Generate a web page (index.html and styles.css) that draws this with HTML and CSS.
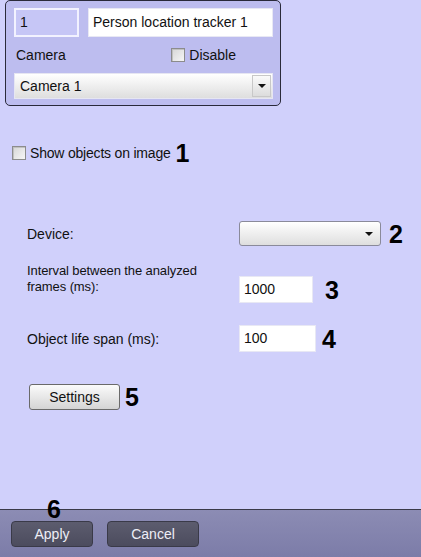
FILE: index.html
```html
<!DOCTYPE html>
<html>
<head>
<meta charset="utf-8">
<link rel="stylesheet" href="styles.css">
</head>
<body>
<div class="page">
  <div class="top-box">
    <div class="row-ids">
      <div class="field id-field">1</div>
      <div class="field name-field">Person location tracker 1</div>
    </div>
    <div class="row-camera">
      <span class="lbl">Camera</span>
      <span class="check-wrap"><span class="checkbox"></span><span class="lbl">Disable</span></span>
    </div>
    <div class="select cam-select">
      <span class="sel-text">Camera 1</span>
      <span class="sel-btn"><span class="arrow"></span></span>
    </div>
  </div>

  <div class="show-row">
    <span class="checkbox"></span>
    <span class="lbl">Show objects on image</span>
    <span class="num num1">1</span>
  </div>

  <div class="form">
    <div class="frow device-row">
      <span class="lbl flabel">Device:</span>
      <div class="select dev-select"><span class="sel-text"></span><span class="arrow"></span></div>
      <span class="num num2">2</span>
    </div>
    <div class="frow interval-row">
      <span class="lbl flabel two">Interval between the analyzed<br>frames (ms):</span>
      <div class="field num-field w74">1000</div>
      <span class="num num3">3</span>
    </div>
    <div class="frow life-row">
      <span class="lbl flabel">Object life span (ms):</span>
      <div class="field num-field w77">100</div>
      <span class="num num4">4</span>
    </div>
    <div class="frow settings-row">
      <button class="btn">Settings</button>
      <span class="num num5">5</span>
    </div>
  </div>

  <div class="footer">
    <span class="num num6">6</span>
    <button class="dbtn apply">Apply</button>
    <button class="dbtn cancel">Cancel</button>
  </div>
</div>
</body>
</html>
```
FILE: styles.css
```css
* { box-sizing: border-box; }
html, body { margin: 0; padding: 0; }
body {
  background: #d0d0fb;
  font-family: "Liberation Sans", Arial, sans-serif;
  font-size: 14px;
  color: #111;
}
.page {
  width: 421px;
  height: 557px;
  display: flex;
  flex-direction: column;
  position: relative;
  overflow: hidden;
}
.top-box {
  margin-left: 5px;
  width: 276px;
  height: 106px;
  border: 1px solid #2a2a3a;
  border-radius: 5px;
  background: #bdbdef;
  padding: 7px 0 0 8px;
  display: flex;
  flex-direction: column;
}
.row-ids { display: flex; gap: 9px; height: 29px; }
.field {
  height: 29px;
  line-height: 26px;
  padding-left: 4px;
  background: #fff;
  border: 1px solid #e8e8f4;
}
.id-field {
  width: 65px;
  background: #c6c6f6;
  border: 2px solid #f2f2ff;
  line-height: 24px;
}
.name-field { width: 185px; }
.row-camera {
  display: flex;
  align-items: center;
  justify-content: space-between;
  height: 36px;
  padding-left: 2px;
  padding-right: 44px;
}
.check-wrap { display: flex; align-items: center; gap: 4px; }
.checkbox {
  display: inline-block;
  width: 14px;
  height: 14px;
  border: 1px solid #8c8c8c;
  background: linear-gradient(135deg, #d6d6d6, #f6f6f6);
  box-shadow: inset 1px 1px 0 #c0c0c0;
}
.select {
  display: flex;
  align-items: center;
  justify-content: space-between;
  border: 1px solid #8a8a9a;
  background: linear-gradient(#ffffff, #dedede);
}
.cam-select {
  width: 259px;
  height: 26px;
  padding: 0 1px 0 5px;
  border-color: #e6e6f2;
}
.sel-btn {
  width: 19px;
  height: 22px;
  background: linear-gradient(#fafafa, #dcdcdc);
  border: 1px solid #c8c8c8;
  display: flex;
  align-items: center;
  justify-content: center;
}
.arrow {
  width: 0;
  height: 0;
  border-left: 4px solid transparent;
  border-right: 4px solid transparent;
  border-top: 4px solid #111;
}
.show-row {
  margin-top: 39px;
  padding-left: 12px;
  display: flex;
  align-items: center;
  gap: 4px;
  height: 16px;
  letter-spacing: -0.2px;
}
.num {
  font-weight: bold;
  font-size: 25px;
  line-height: 20px;
  color: #000;
  letter-spacing: 0;
}
.num1 { margin-left: 1px; }
.form {
  padding-left: 27px;
  display: flex;
  flex-direction: column;
}
.frow { display: flex; align-items: center; }
.flabel { width: 212px; }
.device-row { margin-top: 60px; height: 25px; }
.dev-select {
  width: 142px;
  height: 25px;
  border-radius: 3px;
  padding: 0 7px 0 5px;
}
.num2 { margin-left: 8px; }
.interval-row { margin-top: 17px; height: 40px; align-items: flex-start; }
.two { line-height: 16px; font-size: 13px; letter-spacing: -0.1px; }
.num-field { height: 27px; line-height: 24px; margin-top: 13px; }
.w74 { width: 74px; }
.w77 { width: 77px; }
.num3 { margin-left: 12px; margin-top: 17px; }
.life-row { margin-top: 22px; height: 27px; }
.life-row .num-field { margin-top: 0; }
.num4 { margin-left: 6px; }
.settings-row { margin-top: 32px; padding-left: 2px; height: 26px; }
.btn {
  width: 91px;
  height: 26px;
  font-family: "Liberation Sans", Arial, sans-serif;
  font-size: 14px;
  color: #111;
  border: 1px solid #6a6a6a;
  border-radius: 3px;
  background: linear-gradient(#fbfbfb, #d4d4d4);
  padding: 0;
}
.num5 { margin-left: 5px; }
.footer {
  margin-top: auto;
  height: 48px;
  border-top: 1px solid #3a3a48;
  background: linear-gradient(#8c8cb4, #7c7ca8);
  display: flex;
  align-items: flex-start;
  padding: 11px 0 0 11px;
  gap: 14px;
  position: relative;
}
.num6 {
  position: absolute;
  left: 47px;
  top: -11px;
}
.dbtn {
  height: 26px;
  border: 1px solid #3a3a48;
  border-radius: 4px;
  background: linear-gradient(#5c5c6e, #4c4c5e);
  color: #eeeef6;
  font-family: "Liberation Sans", Arial, sans-serif;
  font-size: 14px;
  padding: 0;
}
.apply { width: 82px; }
.cancel { width: 92px; }
```
